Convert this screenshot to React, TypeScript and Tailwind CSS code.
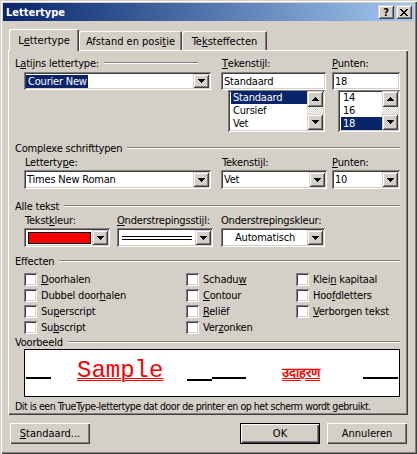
import React from "react";

const SUNKEN =
  "shadow-[inset_1px_1px_0_#808080,inset_-1px_-1px_0_#ffffff,inset_2px_2px_0_#404040,inset_-2px_-2px_0_#d4d0c8]";
const RAISED =
  "shadow-[inset_1px_1px_0_#ffffff,inset_-1px_-1px_0_#404040,inset_-2px_-2px_0_#808080]";
const SMALL_BTN =
  "shadow-[inset_1px_1px_0_#d4d0c8,inset_-1px_-1px_0_#404040,inset_2px_2px_0_#ffffff,inset_-2px_-2px_0_#808080]";

function Arrow({ up = false }: { up?: boolean }) {
  return (
    <svg
      width="7"
      height="4"
      viewBox="0 0 7 4"
      shapeRendering="crispEdges"
      className={up ? "rotate-180" : ""}
    >
      <path d="M0 0h7v1H0zM1 1h5v1H1zM2 2h3v1H2zM3 3h1v1H3z" fill="#000" />
    </svg>
  );
}

function DropBtn() {
  return (
    <div className={`w-[16px] h-full bg-[#d4d0c8] flex items-center justify-center ${SMALL_BTN}`}>
      <Arrow />
    </div>
  );
}

function Combo({ className, children }: { className: string; children?: React.ReactNode }) {
  return (
    <div className={`flex bg-white p-[2px] ${SUNKEN} ${className}`}>
      <div className="flex-1 flex items-center min-w-0 overflow-hidden whitespace-nowrap">
        {children}
      </div>
      <DropBtn />
    </div>
  );
}

function GroupHeader({ children, className = "" }: { children: React.ReactNode; className?: string }) {
  return (
    <div className={`h-[14px] flex items-center ${className}`}>
      <span className="whitespace-nowrap">{children}</span>
      <div className="flex-1 ml-[5px] h-[2px] border-t border-t-[#808080] border-b border-b-white" />
    </div>
  );
}

function ListBox({ items, sel, className }: { items: string[]; sel: string; className: string }) {
  return (
    <div className={`flex bg-white pt-[1px] px-[2px] pb-[2px] ${SUNKEN} ${className}`}>
      <div className="flex-1 flex flex-col pl-[1px]">
        {items.map((it) => (
          <div
            key={it}
            className={`h-[13px] leading-[13px] pl-[2px] ${it === sel ? "bg-[#0a246a] text-white" : ""}`}
          >
            {it}
          </div>
        ))}
      </div>
      <div className="w-[16px] flex flex-col">
        <div className={`h-[16px] bg-[#d4d0c8] flex items-center justify-center ${SMALL_BTN}`}>
          <Arrow up />
        </div>
        <div className="flex-1 bg-[repeating-conic-gradient(#ffffff_0%_25%,#d4d0c8_0%_50%)] bg-size-[2px_2px]" />
        <div className={`h-[16px] bg-[#d4d0c8] flex items-center justify-center ${SMALL_BTN}`}>
          <Arrow />
        </div>
      </div>
    </div>
  );
}

function Check({ children }: { children?: React.ReactNode }) {
  return (
    <div className="h-[16px] flex items-center">
      <div className={`w-[13px] h-[13px] bg-white ${SUNKEN}`} />
      <span className="ml-[4px] whitespace-nowrap">{children}</span>
    </div>
  );
}

function Button({ children, className = "", def = false }: { children: React.ReactNode; className?: string; def?: boolean }) {
  return (
    <div
      className={`h-[21px] flex items-center justify-center bg-[#d4d0c8] ${
        def
          ? "shadow-[inset_0_0_0_1px_#000000,inset_2px_2px_0_#ffffff,inset_-2px_-2px_0_#404040,inset_-3px_-3px_0_#808080]"
          : RAISED
      } ${className}`}
    >
      {children}
    </div>
  );
}

export default function App() {
  return (
    <div className="w-[417px] h-[454px] bg-[#d4d0c8] p-[3px] flex flex-col text-black text-[11px] leading-[13px] tracking-[-0.2px] font-['DejaVu_Sans_Condensed','DejaVu_Sans',sans-serif] font-stretch-condensed shadow-[inset_1px_1px_0_#d4d0c8,inset_2px_2px_0_#ffffff,inset_-1px_-1px_0_#404040,inset_-2px_-2px_0_#808080]">
      {/* title bar */}
      <div className="h-[18px] flex items-center bg-linear-to-r from-[#0a246a] to-[#a6caf0] pl-[3px] pr-[2px]">
        <span className="flex-1 text-white font-bold tracking-normal">Lettertype</span>
        <div className={`w-[16px] h-[14px] bg-[#d4d0c8] flex items-center justify-center font-bold text-[11px] ${SMALL_BTN}`}>
          ?
        </div>
        <div className={`ml-[2px] w-[16px] h-[14px] bg-[#d4d0c8] flex items-center justify-center ${SMALL_BTN}`}>
          <svg width="8" height="7" viewBox="0 0 8 7" shapeRendering="crispEdges">
            <path
              d="M0 0h2v1H0zM6 0h2v1H6zM1 1h2v1H1zM5 1h2v1H5zM2 2h4v1H2zM3 3h2v1H3zM2 4h4v1H2zM1 5h2v1H1zM5 5h2v1H5zM0 6h2v1H0zM6 6h2v1H6z"
              fill="#000"
            />
          </svg>
        </div>
      </div>

      <div className="flex-1 flex flex-col pl-[5px] pr-[6px]">
        {/* tabs */}
        <div className="mt-[8px] h-[21px] flex items-end pl-[1px] tracking-normal">
          <div className="relative z-10 -mb-px w-[70px] h-[22px] bg-[#d4d0c8] rounded-t-[2px] flex items-center justify-center pt-[1px] shadow-[inset_1px_1px_0_#ffffff,inset_-1px_0_0_#404040,inset_-2px_0_0_#808080]">
            L<u>e</u>ttertype
          </div>
          <div className="w-[103px] h-[19px] bg-[#d4d0c8] rounded-t-[2px] flex items-center justify-center pt-[2px] shadow-[inset_1px_1px_0_#ffffff,inset_-1px_0_0_#404040,inset_-2px_0_0_#808080]">
            Afstand en posi<u>t</u>ie
          </div>
          <div className="w-[85px] h-[19px] bg-[#d4d0c8] rounded-t-[2px] flex items-center justify-center pt-[2px] shadow-[inset_1px_1px_0_#ffffff,inset_-1px_0_0_#404040,inset_-2px_0_0_#808080]">
            Te<u>k</u>steffecten
          </div>
        </div>

        {/* panel */}
        <div className={`h-[365px] bg-[#d4d0c8] px-[7px] flex flex-col ${RAISED}`}>
          {/* latin font */}
          <div className="mt-[6px] flex">
            <div className="w-[196px] flex flex-col">
              <GroupHeader className="mr-[13px]">
                L<u>a</u>tijns lettertype:
              </GroupHeader>
              <Combo className="mt-[2px] ml-[9px] w-[187px] h-[18px]">
                <span className="pl-[2px] pr-[1px] bg-[#0a246a] text-white">Courier New</span>
              </Combo>
            </div>
            <div className="ml-[10px] w-[105px] flex flex-col">
              <div className="h-[14px] flex items-center pl-[1px]">
                <u>T</u>ekenstijl:
              </div>
              <div className={`mt-[2px] h-[18px] bg-white p-[2px] pl-[3px] flex items-center ${SUNKEN}`}>
                Standaard
              </div>
              <ListBox
                className="ml-[7px] w-[97px] h-[42px]"
                items={["Standaard", "Cursief", "Vet"]}
                sel="Standaard"
              />
            </div>
            <div className="ml-[6px] w-[68px] flex flex-col">
              <div className="h-[14px] flex items-center">
                <u>P</u>unten:
              </div>
              <div className={`mt-[2px] h-[18px] bg-white p-[2px] pl-[3px] flex items-center ${SUNKEN}`}>
                18
              </div>
              <ListBox className="ml-[6px] w-[62px] h-[42px]" items={["14", "16", "18"]} sel="18" />
            </div>
          </div>

          {/* complex scripts */}
          <GroupHeader className="mt-[9px] mr-[1px]">Complexe schrifttypen</GroupHeader>
          <div className="flex">
            <div className="ml-[9px] w-[187px] flex flex-col">
              <div className="h-[14px] flex items-center pl-[1px]">
                Letterty<u>p</u>e:
              </div>
              <Combo className="mt-px h-[19px]">
                <span className="pl-[1px]">Times New Roman</span>
              </Combo>
            </div>
            <div className="ml-[10px] w-[106px] flex flex-col">
              <div className="h-[14px] flex items-center pl-[1px]">
                Tekensti<u>j</u>l:
              </div>
              <Combo className="mt-px h-[19px]">
                <span className="pl-[1px]">Vet</span>
              </Combo>
            </div>
            <div className="ml-[5px] w-[68px] flex flex-col">
              <div className="h-[14px] flex items-center">
                <u>P</u>unten:
              </div>
              <Combo className="mt-px h-[19px]">
                <span className="pl-[1px]">10</span>
              </Combo>
            </div>
          </div>

          {/* all text */}
          <GroupHeader className="mt-[10px] mr-[1px]">Alle tekst</GroupHeader>
          <div className="flex">
            <div className="ml-[9px] w-[86px] flex flex-col">
              <div className="h-[14px] flex items-center pl-[1px]">
                Tekst<u>k</u>leur:
              </div>
              <Combo className="mt-px h-[19px]">
                <div className="ml-[2px] mr-[1px] flex-1 h-[12px] bg-[#ff0000] border border-black" />
              </Combo>
            </div>
            <div className="ml-[7px] w-[96px] flex flex-col">
              <div className="h-[14px] flex items-center">
                <u>O</u>nderstrepingsstijl:
              </div>
              <Combo className="mt-px h-[19px]">
                <div className="ml-[3px] mr-[3px] flex-1 h-[4px] border-t border-b border-black" />
              </Combo>
            </div>
            <div className="ml-[8px] w-[104px] flex flex-col">
              <div className="h-[14px] flex items-center">
                Onderstrepin<u>g</u>skleur:
              </div>
              <Combo className="mt-px h-[19px]">
                <span className="flex-1 text-center">Automatisch</span>
              </Combo>
            </div>
          </div>

          {/* effects */}
          <GroupHeader className="mt-[7px] mr-[1px]">Effecten</GroupHeader>
          <div className="mt-[3px] ml-[9px] grid grid-cols-[162px_110px_1fr]">
            <Check>
              <u>D</u>oorhalen
            </Check>
            <Check>
              Schadu<u>w</u>
            </Check>
            <Check>
              Klei<u>n</u> kapitaal
            </Check>
            <Check>
              Dubbel door<u>h</u>alen
            </Check>
            <Check>
              <u>C</u>ontour
            </Check>
            <Check>
              Hoo<u>f</u>dletters
            </Check>
            <Check>
              Su<u>p</u>erscript
            </Check>
            <Check>
              <u>R</u>eliëf
            </Check>
            <Check>
              <u>V</u>erborgen tekst
            </Check>
            <Check>
              Su<u>b</u>script
            </Check>
            <Check>
              Ver<u>z</u>onken
            </Check>
            <div />
          </div>

          {/* preview */}
          <GroupHeader className="mr-[1px]">Voorbeeld</GroupHeader>
          <div className="ml-[9px] w-[376px] h-[48px] bg-white border border-black flex items-start tracking-normal">
            <div className="ml-[1px] w-[25px] h-[2px] mt-[27px] bg-black" />
            <div className="ml-[26px] w-[84px] mt-[9px] whitespace-nowrap font-['Liberation_Mono',monospace] text-[24px] leading-[24px] text-[#ff0000] underline decoration-double decoration-1">
              Sample
            </div>
            <div className="ml-[26px] w-[25px] h-[2px] mt-[29px] bg-black" />
            <div className="w-[34px] h-[2px] mt-[27px] bg-black" />
            <div className="ml-[36px] w-[47px] mt-[16px] whitespace-nowrap text-[13px] leading-[14px] font-bold text-[#ff0000] underline decoration-double decoration-1">
              उदाहरण
            </div>
            <div className="ml-[34px] w-[35px] h-[2px] mt-[27px] bg-black" />
          </div>
          <div className="mt-[2px] h-[14px] flex items-center whitespace-nowrap text-[10.5px] tracking-[-0.45px]">
            Dit is een TrueType-lettertype dat door de printer en op het scherm wordt gebruikt.
          </div>
        </div>

        {/* buttons */}
        <div className="mt-[8px] flex tracking-normal">
          <Button className="ml-[2px] w-[80px]">
            <u>S</u>tandaard...
          </Button>
          <div className="flex-1" />
          <Button def className="w-[80px]">
            OK
          </Button>
          <Button className="ml-[7px] mr-[1px] w-[80px]">Annuleren</Button>
        </div>
      </div>
    </div>
  );
}
